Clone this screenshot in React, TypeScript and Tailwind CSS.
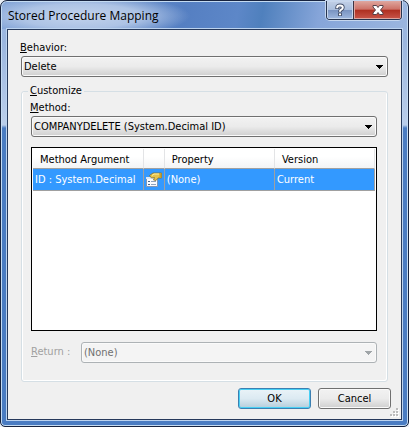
import { useState } from 'react';
import type { ReactNode } from 'react';

interface ComboProps {
  id: string;
  options: string[];
  disabled?: boolean;
  className?: string;
}

interface MethodArgument {
  argument: string;
  property: string;
  version: string;
}

const methodArguments: MethodArgument[] = [
  { argument: 'ID : System.Decimal', property: '(None)', version: 'Current' },
];

const Combo = ({ id, options, disabled, className = '' }: ComboProps) => (
  <div className={`relative ${className}`}>
    <select
      id={id}
      disabled={disabled}
      className="block h-[21px] w-full appearance-none rounded-[3px] border border-[#707070] bg-linear-to-b from-[#f2f2f2] from-0% via-[#ebebeb] via-50% to-[#cfcfcf] px-[2px] pt-px leading-4 text-black shadow-[inset_0_0_0_1px_#fafafa] outline-none disabled:border-[#adb2b5] disabled:bg-[#f4f4f4] disabled:bg-none disabled:text-[#707070] disabled:opacity-100"
    >
      {options.map((option) => (
        <option key={option}>{option}</option>
      ))}
    </select>
    <svg
      className={`pointer-events-none absolute top-2 right-[5px] ${disabled ? 'fill-[#a0a5a8]' : 'fill-black'}`}
      width="7"
      height="5"
      viewBox="0 0 7 5"
      shapeRendering="crispEdges"
    >
      <path d="M0 1h7v1H6v1H5v1H4v1H3V4H2V3H1V2H0z" />
    </svg>
  </div>
);

const PropertiesIcon = () => (
  <svg width="16" height="16" viewBox="0 0 16 16">
    <path d="M.5 5.5h11v9H.5z" fill="#f8fbff" stroke="#8096b4" />
    <path d="M0 5h12v2H0z" fill="#dce6f2" />
    <path d="M2 9.500h2M2 12.500h2" stroke="#46658f" />
    <path d="M5 9.500h5M5 12.500h5" stroke="#8fa3bd" />
    <path d="M3.500 3.500L7 1h8.500v5H12l-2 2.500L7.500 8l1-2.500-3 .5z" fill="#e5c34d" stroke="#7a6522" strokeWidth=".7" />
    <path d="M6 3.500L8 2h5" stroke="#fff0a0" fill="none" />
    <path d="M13.500 1h2v5h-2z" fill="#c99f2b" />
  </svg>
);

const HelpGlyph = () => (
  <svg width="12" height="14" viewBox="0 0 12 14" fill="none">
    <path d="M3.200 6V4.500Q3.200 2.500 6 2.500T8.800 4.600Q8.800 6 7.300 6.600Q6 7.200 6 8.200V9" stroke="#45506a" strokeWidth="3.800" />
    <path d="M6 9.600v3.400" stroke="#45506a" strokeWidth="3.800" />
    <path d="M3.200 5.200V4.500Q3.200 2.500 6 2.500T8.800 4.600Q8.800 6 7.300 6.600Q6 7.200 6 8.200V8.700M6 10.400v1.800" stroke="#fff" strokeWidth="2" />
  </svg>
);

const CloseGlyph = () => (
  <svg width="14" height="12" viewBox="0 0 14 12">
    <path
      d="M2 1.500h3.500L7 3.500l1.500-2H12v1.500L9.500 6 12 9v1.500H8.500L7 8.500l-1.500 2H2V9l2.500-3L2 3z"
      fill="#fff"
      stroke="#554049"
    />
  </svg>
);

const ResizeGrip = () => (
  <svg className="absolute right-[2px] bottom-[2px]" width="9" height="9" viewBox="0 0 9 9" shapeRendering="crispEdges">
    <path d="M7 1h2v2H7zM4 4h2v2H4zM7 4h2v2H7zM1 7h2v2H1zM4 7h2v2H4zM7 7h2v2H7z" fill="#fff" />
    <path d="M6 0h2v2H6zM3 3h2v2H3zM6 3h2v2H6zM0 6h2v2H0zM3 6h2v2H3zM6 6h2v2H6z" fill="#bcbcbc" />
  </svg>
);

const DialogButton = ({ primary, children }: { primary?: boolean; children: ReactNode }) => (
  <button
    type="button"
    className={`h-[21px] w-[73px] rounded-[3px] border bg-linear-to-b text-center leading-4 ${
      primary
        ? 'border-[#3c7fb1] from-[#eaf3f8] via-[#dceaf2] to-[#b4cddb] shadow-[inset_0_0_0_1px_#48d0f5]'
        : 'border-[#707070] from-[#f2f2f2] via-[#ebebeb] to-[#cfcfcf] shadow-[inset_0_0_0_1px_#fafafa]'
    }`}
  >
    {children}
  </button>
);

const headClass =
  'h-5 border-r border-b border-r-[#e3e4e6] border-b-[#a0a0a0] bg-linear-to-b from-white from-40% to-[#f3f4f5] pt-[2px] text-left font-normal';
const cellClass = 'h-[22px] border-r border-b border-[#a0a0a0] px-[2px] pt-px';

export default function App() {
  const [selected, setSelected] = useState(0);

  return (
    <div className="bg-[#e9eef5]">
      <div className="flex min-h-screen flex-col rounded-t-[7px] rounded-b-[5px] border border-[#17233f] bg-[linear-gradient(to_bottom,#9db9e2_0,#9bb6df_40px,#b9cdea_120px,#b9cdea_124px,#4a7cc2_127px,#4a7cc2_100%)] px-[6px] pb-[6px] font-['DejaVu_Sans_Condensed','DejaVu_Sans',sans-serif] text-[11px] text-black shadow-[inset_0_0_0_1px_#c4dbf2]">
        <header className="-mx-[5px] mt-px flex h-[27px] items-start justify-between rounded-t-[5px] bg-[radial-gradient(ellipse_110px_22px_at_78px_14px,#c2d3ec_0,#adc3e5_55%,transparent_100%),linear-gradient(100deg,#7c9fd5_0,#557fc2_45%,#5d87c8_58%,#4f80bd_64%,#86a5d9_78%,#9bb6df_100%)] pr-[5px] pl-[6px]">
          <h1 className="pt-[6px] font-['Open_Sans','Noto_Sans',sans-serif] text-[12px] leading-4">
            Stored Procedure Mapping
          </h1>
          <div className="-mt-px flex h-[19px] overflow-hidden rounded-b-[4px] border border-t-0 border-[#26344f] shadow-[0_0_0_1px_#c5d6ee]">
            <button
              type="button"
              aria-label="Help"
              className="flex w-[27px] items-center justify-center border-r border-[#3d3443] bg-[linear-gradient(to_bottom,#c2d0e6_0,#a9bddc_48%,#7892c0_50%,#9fb8df_100%)] shadow-[inset_0_0_0_1px_#c7d6ec]"
            >
              <HelpGlyph />
            </button>
            <button
              type="button"
              aria-label="Close"
              className="flex w-[47px] items-center justify-center bg-[linear-gradient(to_bottom,#dfa79f_0,#cd7167_46%,#ae2e20_50%,#c9564a_100%)] shadow-[inset_0_0_0_1px_#dda49e]"
            >
              <CloseGlyph />
            </button>
          </div>
        </header>

        <main className="relative flex flex-1 flex-col border border-[#26395b] bg-[#f0f0f0] px-[13px] pt-[11px] pb-[10px] shadow-[0_0_0_1px_#bcd3ef]">
          <label htmlFor="behavior" className="mb-px -ml-px leading-[14px]">
            <u>B</u>ehavior:
          </label>
          <Combo id="behavior" options={['Delete', 'Insert', 'Update']} />

          <fieldset className="mt-[7px] rounded-[3px] border border-[#d5dfe5] pr-[10px] pb-[18px] pl-[9px] shadow-[inset_1px_0_0_#fff,inset_-1px_-1px_0_#fff]">
            <legend className="-ml-[3px] px-[2px] leading-[14px]">
              <u>C</u>ustomize
            </legend>
            <div className="flex flex-col">
              <label htmlFor="method" className="mt-[3px] mb-px -ml-px leading-[14px]">
                <u>M</u>ethod:
              </label>
              <Combo id="method" options={['COMPANYDELETE (System.Decimal ID)']} />

              <div className="mt-[10px] min-h-[184px] border border-black bg-white p-px">
                <table className="w-full table-fixed border-separate border-spacing-0 leading-4">
                  <colgroup>
                    <col className="w-[32.4%]" />
                    <col className="w-[21px]" />
                    <col className="w-[32.2%]" />
                    <col />
                  </colgroup>
                  <thead>
                    <tr>
                      <th className={`${headClass} pl-[7px]`}>Method Argument</th>
                      <th className={headClass} aria-label="Properties" />
                      <th className={`${headClass} pl-[7px]`}>Property</th>
                      <th className={`${headClass} pl-[7px]`}>Version</th>
                    </tr>
                  </thead>
                  <tbody>
                    {methodArguments.map((row, index) => (
                      <tr
                        key={row.argument}
                        onClick={() => setSelected(index)}
                        className={selected === index ? 'bg-[#3399ff] text-white' : ''}
                      >
                        <td className={cellClass}>{row.argument}</td>
                        <td className={cellClass}>
                          <PropertiesIcon />
                        </td>
                        <td className={cellClass}>{row.property}</td>
                        <td className={cellClass}>{row.version}</td>
                      </tr>
                    ))}
                  </tbody>
                </table>
              </div>

              <div className="mt-[11px] flex items-center">
                <label htmlFor="return" className="w-[50px] text-[#a0a0a0]">
                  <u>R</u>eturn :
                </label>
                <Combo id="return" options={['(None)']} disabled className="flex-1" />
              </div>
            </div>
          </fieldset>

          <div className="-mr-[3px] mt-[6px] flex justify-end gap-[7px]">
            <DialogButton primary>OK</DialogButton>
            <DialogButton>Cancel</DialogButton>
          </div>
          <ResizeGrip />
        </main>
      </div>
    </div>
  );
}
